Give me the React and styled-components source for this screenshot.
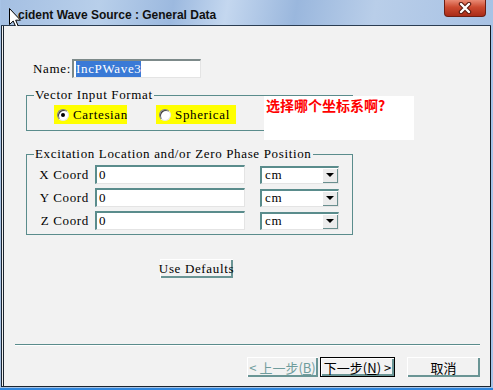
import React from 'react'
import styled, { createGlobalStyle } from 'styled-components'

const GlobalStyle = createGlobalStyle`
  html, body { margin: 0; padding: 0; background: #f2f2f2; }
  * { box-sizing: border-box; }
`

const TEAL = '#5a8c8c'

const Frame = styled.div`
  position: relative;
  width: 493px;
  height: 390px;
  display: flex;
  flex-direction: column;
  padding: 0 2px 1px 1px;
  background: #a7c3e6;
  border-bottom: 2px solid #2f86dc;
`

const TitleBar = styled.div`
  height: 26px;
  display: flex;
  align-items: flex-start;
  padding-left: 17px;
  border-bottom: 1px solid #2b3d52;
  background: linear-gradient(100deg, #a4bfe2 0%, #b8cfea 20%, #9cb9df 35%, #c4d7ef 46%, #9ab7dd 60%, #b9cee9 76%, #a8c2e4 100%);
`

const Title = styled.div`
  margin-top: 8px;
  font-family: "Liberation Sans", Arial, sans-serif;
  font-weight: bold;
  font-size: 12px;
  color: #111;
  white-space: nowrap;
`

const CloseBtn = styled.div`
  margin-left: auto;
  margin-right: 5px;
  width: 42px;
  height: 17px;
  display: flex;
  align-items: center;
  justify-content: center;
  border: 1px solid #6e1e12;
  border-top: none;
  border-radius: 0 0 4px 4px;
  background: linear-gradient(#e98a74, #cc4a30 45%, #a92b18);
`

const Cursor = styled.svg`
  position: absolute;
  left: 9px;
  top: 8px;
`

const Body = styled.div`
  position: relative;
  flex: 1;
  display: flex;
  flex-direction: column;
  background: #f2f2f2;
  border-left: 3px double #1b2631;
  border-right: 1px solid #101820;
  border-bottom: 1px solid #1b2631;
  font-family: "Liberation Serif", "Times New Roman", serif;
  font-size: 13px;
  letter-spacing: 0.65px;
  color: #000;
`

const Content = styled.div`
  padding-left: 22px;
  display: flex;
  flex-direction: column;
  align-items: flex-start;
`

const NameRow = styled.div`
  margin-top: 33px;
  height: 19px;
  display: flex;
  align-items: center;
`

const Label = styled.span`
  display: inline-block;
  width: ${p => p.$w}px;
  margin-left: ${p => p.$ml || 0}px;
  text-align: ${p => p.$align || 'left'};
  white-space: nowrap;
`

const Field = styled.div`
  width: ${p => p.$w}px;
  height: 19px;
  display: flex;
  align-items: center;
  padding-left: 2px;
  margin-left: ${p => p.$ml || 0}px;
  background: #fff;
  border-top: 2px solid ${p => p.$dark || TEAL};
  border-left: 2px solid ${p => p.$dark || TEAL};
  border-right: 1px solid #e4e4e4;
  border-bottom: 1px solid #e4e4e4;
  white-space: nowrap;
`

const Selected = styled.span`
  background: #3a7ad6;
  color: #fff;
`

const Group = styled.fieldset`
  width: 327px;
  margin: ${p => p.$mt}px 0 0 0;
  padding: ${p => p.$pt}px 0 ${p => p.$pb}px 7px;
  border: 1px solid ${TEAL};
  min-width: 0;
`

const Legend = styled.legend`
  padding: 0 1px;
  line-height: 14px;
`

const RadioRow = styled.div`
  display: flex;
  margin-left: 20px;
`

const RadioBox = styled.div`
  width: ${p => p.$w}px;
  height: 19px;
  margin-left: ${p => p.$ml || 0}px;
  display: flex;
  align-items: center;
  gap: 4px;
  padding-left: 3px;
  background: #ffff00;
  overflow: hidden;
  white-space: nowrap;
`

const RadioDot = styled.span`
  flex: none;
  width: 12px;
  height: 12px;
  border-radius: 50%;
  background: #fff;
  border: 1px solid;
  border-color: #7f7f7f #e8e8e8 #e8e8e8 #7f7f7f;
  box-shadow: inset 1px 1px 0 #404040;
  display: flex;
  align-items: center;
  justify-content: center;
  &::after {
    content: '';
    width: 4px;
    height: 4px;
    border-radius: 50%;
    background: ${p => (p.$on ? '#000' : 'transparent')};
  }
`

const CoordList = styled.div`
  display: flex;
  flex-direction: column;
  gap: 4px;
`

const CoordRow = styled.div`
  display: flex;
  align-items: center;
  height: 19px;
`

const Select = styled.div`
  width: 79px;
  height: 18px;
  margin-left: 15px;
  display: flex;
  align-items: center;
  padding-left: 3px;
  background: #fff;
  border-top: 2px solid ${TEAL};
  border-left: 2px solid ${TEAL};
  border-right: 1px solid #e4e4e4;
  border-bottom: 1px solid #e4e4e4;
`

const Arrow = styled.span`
  margin-left: auto;
  width: 16px;
  height: 15px;
  display: flex;
  align-items: center;
  justify-content: center;
  background: #ececec;
  box-shadow: inset 1px 1px 0 #fff, inset -1px -1px 0 #6a8f8f;
  &::after {
    content: '';
    border-left: 4px solid transparent;
    border-right: 4px solid transparent;
    border-top: 4px solid #000;
  }
`

const Button = styled.div`
  width: ${p => p.$w}px;
  height: ${p => p.$h || 20}px;
  margin-left: ${p => p.$ml || 0}px;
  margin-top: ${p => p.$mt || 0}px;
  display: flex;
  align-items: center;
  justify-content: center;
  background: #f2f2f2;
  white-space: nowrap;
  color: ${p => (p.$disabled ? '#6f9c9c' : '#000')};
  border: ${p => (p.$default ? '1px solid #000' : 'none')};
  box-shadow: inset 1px 1px 0 #fff, inset -2px -2px 0 #6a9595;
`

const CnText = styled.span`
  font-family: "Noto Sans CJK SC", "Liberation Sans", sans-serif;
  font-size: 13px;
  letter-spacing: 0;
  u { text-decoration: underline; }
`

const Note = styled.div`
  position: absolute;
  left: 260px;
  top: 70px;
  width: 150px;
  height: 44px;
  padding: 0 0 0 2px;
  background: #fff;
  color: #ff0000;
  font-family: "Noto Sans CJK SC", sans-serif;
  font-weight: bold;
  font-size: 14px;
  line-height: 18px;
  letter-spacing: 0;
`

const Spacer = styled.div`
  flex: 1;
`

const Footer = styled.div`
  padding: 0 10px 9px 11px;
`

const Separator = styled.div`
  border-top: 1px solid ${TEAL};
  border-bottom: 1px solid #fff;
`

const ButtonRow = styled.div`
  margin-top: 11px;
  display: flex;
  justify-content: flex-end;
`

const coords = ['X', 'Y', 'Z']

export default function App() {
  return (
    <Frame>
      <GlobalStyle />
      <TitleBar>
        <Title>cident Wave Source : General Data</Title>
        <CloseBtn>
          <svg width="14" height="12" viewBox="0 0 14 12">
            <path d="M3 2 L11 10 M11 2 L3 10" stroke="#5a1a10" strokeWidth="4.5" strokeLinecap="round" />
            <path d="M3 2 L11 10 M11 2 L3 10" stroke="#fff" strokeWidth="2.4" strokeLinecap="round" />
          </svg>
        </CloseBtn>
      </TitleBar>
      <Cursor width="13" height="20" viewBox="0 0 13 20">
        <path d="M0.5 0.5 L0.5 16.5 L4.2 13 L6.8 19 L9.2 18 L6.7 12.2 L11.5 12.2 Z" fill="#fff" stroke="#000" strokeWidth="1" strokeLinejoin="miter" />
      </Cursor>
      <Body>
        <Content>
          <NameRow>
            <Label $w={39} $ml={7}>Name:</Label>
            <Field $w={129} $dark="#7d8a8a"><Selected>IncPWave3</Selected></Field>
          </NameRow>

          <Group $mt={10} $pt={3} $pb={6}>
            <Legend>Vector Input Format</Legend>
            <RadioRow>
              <RadioBox $w={73}><RadioDot $on />Cartesian</RadioBox>
              <RadioBox $w={80} $ml={29}><RadioDot />Spherical</RadioBox>
            </RadioRow>
          </Group>

          <Group $mt={16} $pt={4} $pb={4}>
            <Legend>Excitation Location and/or Zero Phase Position</Legend>
            <CoordList>
              {coords.map(c => (
                <CoordRow key={c}>
                  <Label $w={55} $align="right">{c} Coord</Label>
                  <Field $w={150} $ml={6}>0</Field>
                  <Select>cm<Arrow /></Select>
                </CoordRow>
              ))}
            </CoordList>
          </Group>

          <Button $w={73} $h={19} $ml={134} $mt={24}>Use Defaults</Button>
        </Content>

        <Note>选择哪个坐标系啊?</Note>

        <Spacer />
        <Footer>
          <Separator />
          <ButtonRow>
            <Button $w={71} $disabled><CnText>&lt; 上一步(<u>B</u>)</CnText></Button>
            <Button $w={75} $ml={2} $default><CnText>下一步(<u>N</u>) &gt;</CnText></Button>
            <Button $w={73} $ml={12}><CnText>取消</CnText></Button>
          </ButtonRow>
        </Footer>
      </Body>
    </Frame>
  )
}
